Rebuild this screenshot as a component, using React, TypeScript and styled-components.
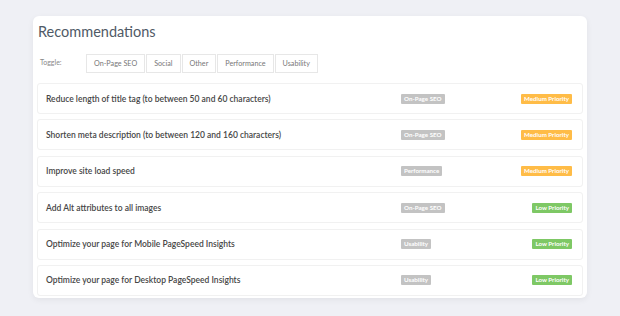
import React from 'react'
import styled, { createGlobalStyle } from 'styled-components'

type Priority = 'Medium' | 'Low'

interface Rec {
  title: string
  category: string
  priority: Priority
}

const recs: Rec[] = [
  { title: 'Reduce length of title tag (to between 50 and 60 characters)', category: 'On-Page SEO', priority: 'Medium' },
  { title: 'Shorten meta description (to between 120 and 160 characters)', category: 'On-Page SEO', priority: 'Medium' },
  { title: 'Improve site load speed', category: 'Performance', priority: 'Medium' },
  { title: 'Add Alt attributes to all images', category: 'On-Page SEO', priority: 'Low' },
  { title: 'Optimize your page for Mobile PageSpeed Insights', category: 'Usability', priority: 'Low' },
  { title: 'Optimize your page for Desktop PageSpeed Insights', category: 'Usability', priority: 'Low' },
]

const tabs = ['On-Page SEO', 'Social', 'Other', 'Performance', 'Usability']

const GlobalStyle = createGlobalStyle`
  html, body {
    margin: 0;
    background: #eff0f5;
    font-family: Lato, "Open Sans", sans-serif;
  }
`

const Page = styled.div`
  padding: 16px 33px 17px;
`

const Card = styled.div`
  width: 554px;
  box-sizing: border-box;
  background: #fff;
  border-radius: 6px;
  box-shadow: 0 2px 6px rgba(0, 0, 0, 0.06);
  padding: 4px 4px 2px;
`

const Title = styled.h2`
  margin: 0 0 0 1px;
  font-size: 14.5px;
  line-height: 24px;
  font-weight: 400;
  color: #4f5a66;
`

const ToggleBar = styled.div`
  display: flex;
  align-items: center;
  margin: 10px 0 10px 3px;
`

const ToggleLabel = styled.span`
  width: 46px;
  font-size: 7px;
  color: #888;
  margin-top: -3px;
`

const Tab = styled.button`
  height: 19px;
  padding: 0 7px;
  margin-right: 1px;
  border: 1px solid #e7e7e7;
  background: #fff;
  font-family: inherit;
  font-size: 7.2px;
  color: #777;
  cursor: pointer;
`

const List = styled.div`
  display: flex;
  flex-direction: column;
  gap: 5.4px;
`

const Row = styled.div`
  display: flex;
  align-items: center;
  box-sizing: border-box;
  height: 31px;
  border: 1px solid #f1f1f1;
  border-radius: 3px;
  padding: 0 10px 0 8px;
`

const RowTitle = styled.div`
  flex: 1;
  font-size: 8.5px;
  font-weight: 600;
  color: #464646;
`

const Badge = styled.span<{ $bg: string }>`
  display: inline-block;
  height: 10px;
  line-height: 10px;
  padding: 0 3px;
  border-radius: 1px;
  background: ${(p) => p.$bg};
  color: #fff;
  font-size: 6.2px;
  font-weight: 700;
  white-space: nowrap;
`

const CategoryCell = styled.div`
  width: 119px;
  display: flex;
  align-items: center;
`

const PriorityCell = styled.div`
  width: 52px;
  display: flex;
  align-items: center;
  justify-content: flex-end;
`

export default function App() {
  return (
    <Page>
      <GlobalStyle />
      <Card>
        <Title>Recommendations</Title>
        <ToggleBar>
          <ToggleLabel>Toggle:</ToggleLabel>
          {tabs.map((t) => (
            <Tab key={t}>{t}</Tab>
          ))}
        </ToggleBar>
        <List>
          {recs.map((r) => (
            <Row key={r.title}>
              <RowTitle>{r.title}</RowTitle>
              <CategoryCell>
                <Badge $bg="#c3c3c3">{r.category}</Badge>
              </CategoryCell>
              <PriorityCell>
                <Badge $bg={r.priority === 'Medium' ? '#ffbc47' : '#7ec865'}>
                  {r.priority} Priority
                </Badge>
              </PriorityCell>
            </Row>
          ))}
        </List>
      </Card>
    </Page>
  )
}
